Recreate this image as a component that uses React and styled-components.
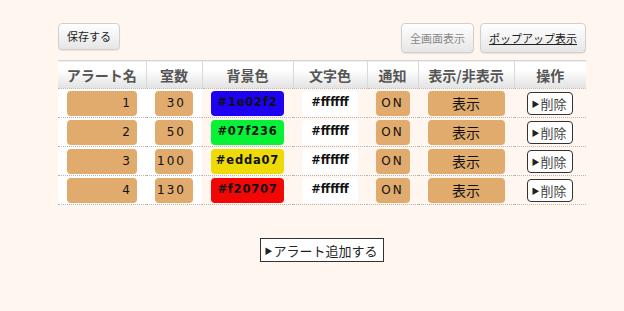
import React from 'react';
import styled, { createGlobalStyle } from 'styled-components';

const GlobalStyle = createGlobalStyle`
  html, body {
    margin: 0;
    background: #fff6f0;
    font-family: "Noto Sans CJK JP", "DejaVu Sans", sans-serif;
  }
`;

const Page = styled.div`
  width: 528px;
  padding: 23px 0 0 58px;
`;

const Toolbar = styled.div`
  display: flex;
  align-items: flex-start;
  gap: 6px;
  height: 37px;
`;

const Spacer = styled.div`
  flex: 1;
`;

const GrayButton = styled.button`
  height: ${(p) => (p.$tall ? '30px' : '27px')};
  padding: 0 8px;
  border: 1px solid #cfcfcf;
  border-radius: 4px;
  background: linear-gradient(#ffffff, #e6e6e6);
  box-shadow: 0 1px 1px rgba(0, 0, 0, 0.08);
  font-family: inherit;
  font-size: 11px;
  line-height: 1;
  color: ${(p) => (p.$muted ? '#888' : '#222')};
  text-decoration: ${(p) => (p.$link ? 'underline' : 'none')};
  cursor: pointer;
`;

const Table = styled.table`
  width: 528px;
  border-collapse: collapse;
  table-layout: fixed;
  line-height: 1;
`;

const Th = styled.th`
  height: 27px;
  padding: 0;
  background: linear-gradient(#ffffff 30%, #e2e2e2);
  border-top: 1px solid #d4d4d4;
  border-left: 1px solid #d9d9d9;
  border-bottom: 1px dotted #bbb;
  color: #555;
  font-size: 14px;
  font-weight: bold;
  text-align: center;
  &:first-child {
    border-left: none;
  }
`;

const Td = styled.td`
  height: 28px;
  padding: 0;
  border-bottom: 1px dotted #b5b5b5;
  background: ${(p) => (p.$white ? '#ffffff' : 'transparent')};
  text-align: center;
  vertical-align: middle;
`;

const Pill = styled.div`
  display: inline-flex;
  align-items: center;
  justify-content: ${(p) => (p.$right ? 'flex-end' : 'center')};
  box-sizing: border-box;
  width: ${(p) => p.$w}px;
  height: 25px;
  padding: 0 ${(p) => (p.$right ? '7px' : '0')};
  border-radius: 4px;
  background: ${(p) => p.$bg || '#e0ab6c'};
  color: #111;
  font-family: ${(p) => (p.$mono ? '"DejaVu Sans", sans-serif' : 'inherit')};
  font-size: ${(p) => p.$fs || 13}px;
  font-weight: ${(p) => (p.$bold ? 'bold' : 'normal')};
  letter-spacing: ${(p) => p.$ls || 0}px;
  vertical-align: middle;
`;

const DelButton = styled.button`
  display: inline-flex;
  align-items: center;
  height: 23px;
  padding: 0 5px 0 3px;
  border: 1px solid #333;
  border-radius: 4px;
  background: #fff;
  font-family: inherit;
  font-size: 13px;
  color: #444;
  cursor: pointer;
`;

const Arrow = styled.span`
  font-size: 8px;
  margin-right: 1px;
  color: #222;
`;

const Footer = styled.div`
  display: flex;
  justify-content: center;
  padding-top: 33px;
`;

const AddButton = styled.button`
  display: inline-flex;
  align-items: center;
  height: 24px;
  padding: 0 5px 0 3px;
  border: 1px solid #333;
  background: #fff;
  font-family: inherit;
  font-size: 13px;
  color: #222;
  cursor: pointer;
`;

const rows = [
  { id: 1, rooms: 30, bg: '#1e02f2' },
  { id: 2, rooms: 50, bg: '#07f236' },
  { id: 3, rooms: 100, bg: '#edda07' },
  { id: 4, rooms: 130, bg: '#f20707' },
];

const App = () => (
  <>
    <GlobalStyle />
    <Page>
      <Toolbar>
        <GrayButton>保存する</GrayButton>
        <Spacer />
        <GrayButton $tall $muted>全画面表示</GrayButton>
        <GrayButton $tall $link>ポップアップ表示</GrayButton>
      </Toolbar>
      <Table>
        <colgroup>
          <col style={{ width: 88 }} />
          <col style={{ width: 56 }} />
          <col style={{ width: 91 }} />
          <col style={{ width: 74 }} />
          <col style={{ width: 51 }} />
          <col style={{ width: 96 }} />
          <col style={{ width: 72 }} />
        </colgroup>
        <thead>
          <tr>
            <Th>アラート名</Th>
            <Th>室数</Th>
            <Th>背景色</Th>
            <Th>文字色</Th>
            <Th>通知</Th>
            <Th>表示/非表示</Th>
            <Th>操作</Th>
          </tr>
        </thead>
        <tbody>
          {rows.map((r) => (
            <tr key={r.id}>
              <Td $white>
                <Pill $w={70} $right $mono $fs={12}>{r.id}</Pill>
              </Td>
              <Td $white>
                <Pill $w={38} $right $mono $fs={12} $ls={2}>{r.rooms}</Pill>
              </Td>
              <Td>
                <Pill $w={73} $bg={r.bg} $mono $bold $fs={11.5} $ls={0.8}>{r.bg}</Pill>
              </Td>
              <Td>
                <Pill $w={56} $bg="#ffffff" $mono $bold $fs={11.5}>#ffffff</Pill>
              </Td>
              <Td>
                <Pill $w={34} $mono $fs={12} $ls={2}>ON</Pill>
              </Td>
              <Td>
                <Pill $w={77} $fs={14}>表示</Pill>
              </Td>
              <Td>
                <DelButton><Arrow>▶</Arrow>削除</DelButton>
              </Td>
            </tr>
          ))}
        </tbody>
      </Table>
      <Footer>
        <AddButton><Arrow>▶</Arrow>アラート追加する</AddButton>
      </Footer>
    </Page>
  </>
);

export default App;
